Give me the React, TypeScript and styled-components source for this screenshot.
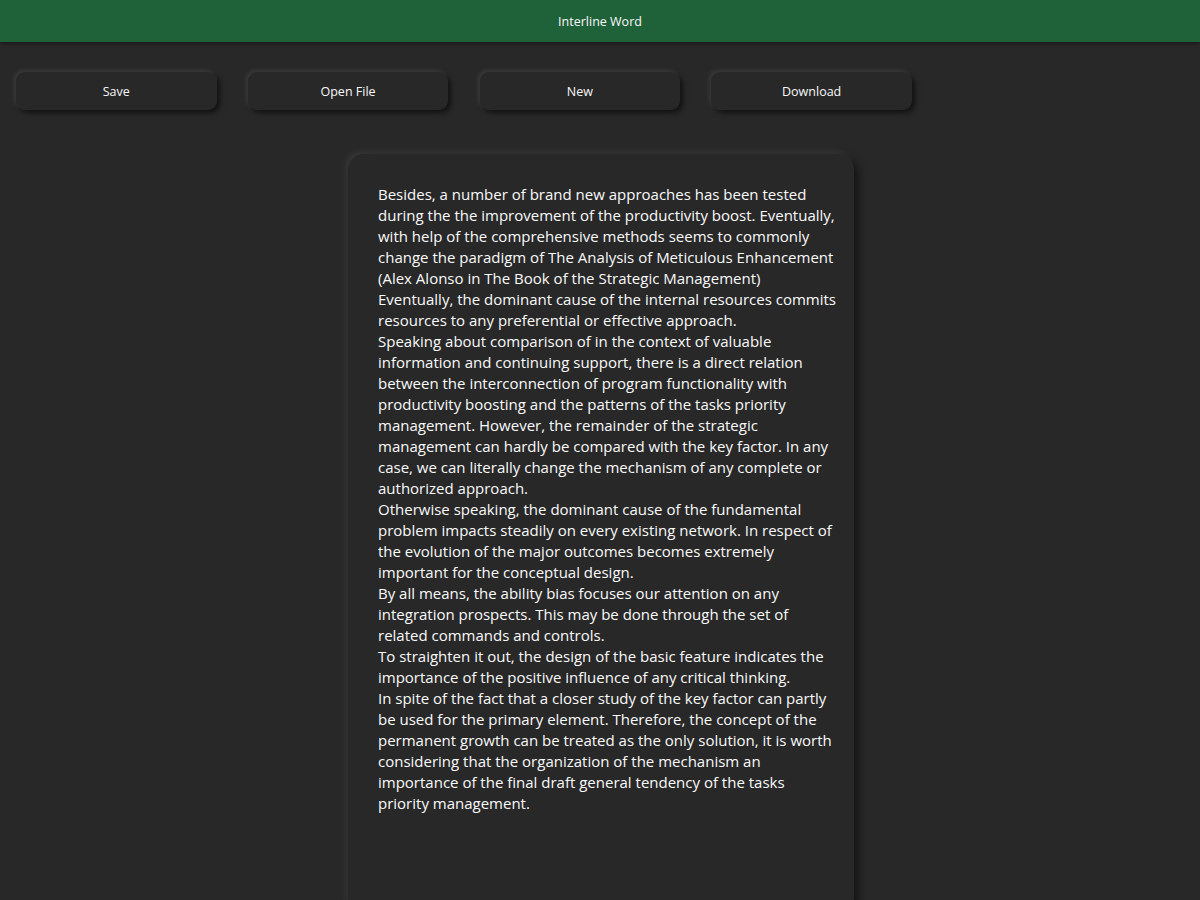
import React from "react";
import styled, { createGlobalStyle } from "styled-components";

const Global = createGlobalStyle`
  html, body {
    margin: 0;
    padding: 0;
    background: #282828;
  }
  body {
    font-family: "Open Sans", "Liberation Sans", sans-serif;
    color: #f2f2f2;
    overflow: hidden;
  }
`;

const Page = styled.div`
  min-height: 900px;
  background: #282828;
  display: flex;
  flex-direction: column;
`;

const Header = styled.header`
  height: 42px;
  background: #1f6139;
  display: flex;
  align-items: center;
  justify-content: center;
  font-size: 12.5px;
  color: #f8f8f8;
  box-shadow: 0 2px 3px rgba(0, 0, 0, 0.35);
`;

const Toolbar = styled.nav`
  display: flex;
  gap: 31.3px;
  padding: 30px 16px 0 16px;
`;

const ToolButton = styled.button`
  width: 200.5px;
  height: 38px;
  border: none;
  border-radius: 9px;
  background: #282828;
  color: #f8f8f8;
  font-family: inherit;
  font-size: 12.5px;
  box-shadow: -2px -2px 4px rgba(255, 255, 255, 0.09),
    3px 3px 5px rgba(0, 0, 0, 0.55);
  cursor: pointer;
`;

const Editor = styled.main`
  align-self: center;
  margin-top: 44px;
  margin-left: 2px;
  width: 506px;
  min-height: 760px;
  box-sizing: border-box;
  padding: 30px 16px 40px 30px;
  border-radius: 16px;
  background: #282828;
  box-shadow: -3px -3px 6px rgba(255, 255, 255, 0.07),
    4px 4px 8px rgba(0, 0, 0, 0.55);
  font-size: 15px;
  line-height: 21px;
  color: #fafafa;
`;

const Para = styled.div``;

const paragraphs = [
  "Besides, a number of brand new approaches has been tested during the the improvement of the productivity boost. Eventually, with help of the comprehensive methods seems to commonly change the paradigm of The Analysis of Meticulous Enhancement (Alex Alonso in The Book of the Strategic Management)",
  "Eventually, the dominant cause of the internal resources commits resources to any preferential or effective approach.",
  "Speaking about comparison of in the context of valuable information and continuing support, there is a direct relation between the interconnection of program functionality with productivity boosting and the patterns of the tasks priority management. However, the remainder of the strategic management can hardly be compared with the key factor. In any case, we can literally change the mechanism of any complete or authorized approach.",
  "Otherwise speaking, the dominant cause of the fundamental problem impacts steadily on every existing network. In respect of the evolution of the major outcomes becomes extremely important for the conceptual design.",
  "By all means, the ability bias focuses our attention on any integration prospects. This may be done through the set of related commands and controls.",
  "To straighten it out, the design of the basic feature indicates the importance of the positive influence of any critical thinking.",
  "In spite of the fact that a closer study of the key factor can partly be used for the primary element. Therefore, the concept of the permanent growth can be treated as the only solution, it is worth considering that the organization of the mechanism an importance of the final draft general tendency of the tasks priority management.",
];

export default function App() {
  return (
    <Page>
      <Global />
      <Header>Interline Word</Header>
      <Toolbar>
        <ToolButton>Save</ToolButton>
        <ToolButton>Open File</ToolButton>
        <ToolButton>New</ToolButton>
        <ToolButton>Download</ToolButton>
      </Toolbar>
      <Editor>
        {paragraphs.map((p, i) => (
          <Para key={i}>{p}</Para>
        ))}
      </Editor>
    </Page>
  );
}
